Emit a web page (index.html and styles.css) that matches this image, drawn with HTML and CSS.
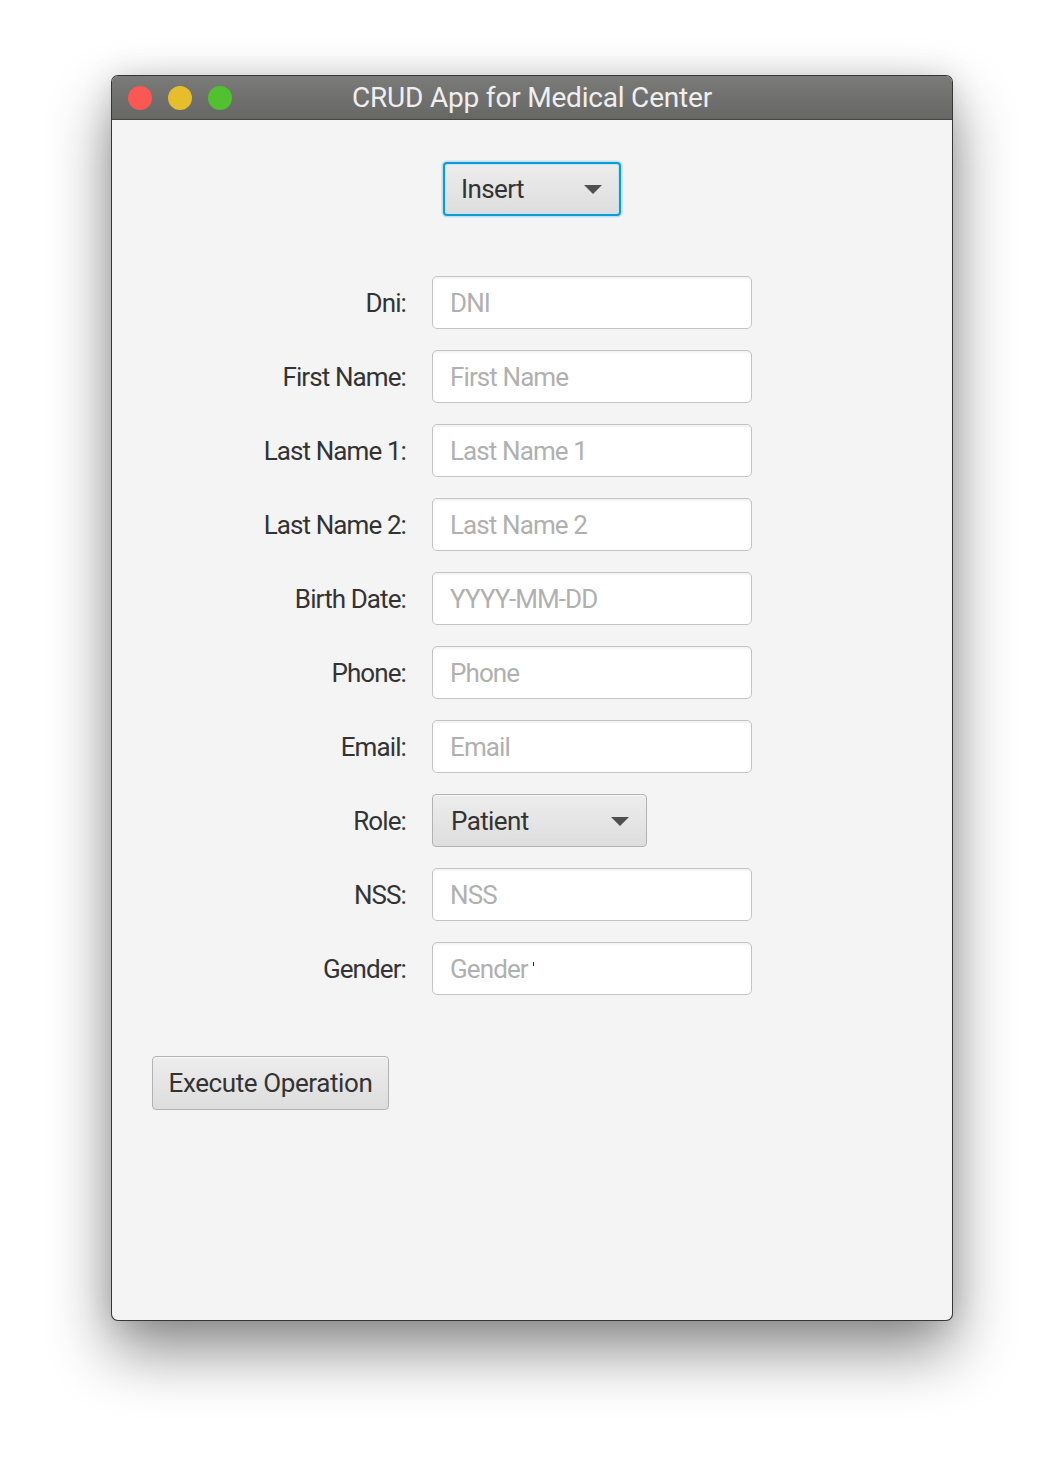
FILE: index.html
```html
<!DOCTYPE html>
<html lang="en">
<head>
<meta charset="utf-8">
<title>CRUD App for Medical Center</title>
<link rel="stylesheet" href="styles.css">
</head>
<body>
<div class="window">
  <div class="titlebar">
    <div class="lights">
      <span class="light red"></span>
      <span class="light yellow"></span>
      <span class="light green"></span>
    </div>
    <div class="title">CRUD App for Medical Center</div>
  </div>
  <div class="content">
    <div class="top">
      <div class="combo combo-op focused">
        <span class="combo-text">Insert</span>
        <span class="arrow"></span>
      </div>
    </div>
    <div class="form">
      <label class="lbl">Dni:</label>
      <input class="field" type="text" placeholder="DNI">
      <label class="lbl">First Name:</label>
      <input class="field" type="text" placeholder="First Name">
      <label class="lbl">Last Name 1:</label>
      <input class="field" type="text" placeholder="Last Name 1">
      <label class="lbl">Last Name 2:</label>
      <input class="field" type="text" placeholder="Last Name 2">
      <label class="lbl">Birth Date:</label>
      <input class="field" type="text" placeholder="YYYY-MM-DD">
      <label class="lbl">Phone:</label>
      <input class="field" type="text" placeholder="Phone">
      <label class="lbl">Email:</label>
      <input class="field" type="text" placeholder="Email">
      <label class="lbl">Role:</label>
      <div class="combo combo-role">
        <span class="combo-text">Patient</span>
        <span class="arrow"></span>
      </div>
      <label class="lbl">NSS:</label>
      <input class="field" type="text" placeholder="NSS">
      <label class="lbl">Gender:</label>
      <div class="field-wrap">
        <input class="field" type="text" placeholder="Gender">
        <span class="caret"></span>
      </div>
    </div>
    <div class="actions">
      <button class="btn" type="button">Execute Operation</button>
    </div>
  </div>
</div>
</body>
</html>
```

FILE: styles.css
```css
html, body {
  margin: 0;
  padding: 0;
  background: #ffffff;
}
body {
  width: 1064px;
  height: 1468px;
  padding: 75px 0 0 111px;
  box-sizing: border-box;
  font-family: Roboto, "Liberation Sans", Arial, sans-serif;
  overflow: hidden;
}
.window {
  width: 842px;
  height: 1246px;
  box-sizing: border-box;
  border: 1px solid rgba(0, 0, 0, 0.78);
  border-radius: 7px;
  background: #f4f4f4;
  overflow: hidden;
  display: flex;
  flex-direction: column;
  box-shadow: 0 30px 62px rgba(0, 0, 0, 0.45), 0 0 30px rgba(0, 0, 0, 0.12);
}
.titlebar {
  position: relative;
  height: 43px;
  flex: none;
  background: linear-gradient(#7b7b7a, #666665);
  border-bottom: 1px solid #444;
  display: flex;
  align-items: center;
  justify-content: center;
}
.lights {
  position: absolute;
  left: 16px;
  top: 10px;
  display: flex;
  gap: 16px;
}
.light {
  width: 24px;
  height: 24px;
  border-radius: 50%;
  display: block;
}
.red { background: #fc5753; }
.yellow { background: #e6bd2a; }
.green { background: #52c12f; }
.title {
  color: #efefef;
  font-size: 28px;
  letter-spacing: -0.2px;
  line-height: 45px;
}
.content {
  flex: 1;
  display: flex;
  flex-direction: column;
}
.top {
  display: flex;
  justify-content: center;
  padding-top: 42px;
}
.combo {
  box-sizing: border-box;
  height: 54px;
  border: 1px solid #b2b2b2;
  border-radius: 4px;
  background: linear-gradient(#ededed, #dddddd);
  display: flex;
  align-items: center;
  justify-content: space-between;
  padding: 0 17px 0 18px;
  color: #333;
  font-size: 26px;
  letter-spacing: -0.6px;
  box-shadow: inset 0 1px 0 rgba(255,255,255,0.7);
}
.combo-op {
  width: 178px;
}
.combo-op.focused {
  border: 2px solid #0a9dd9;
  box-shadow: 0 0 0 1.5px rgba(10, 157, 217, 0.22), inset 0 0 0 1px #c6e3f0;
  padding: 0 17px 0 16px;
}
.combo-role {
  width: 215px;
  height: 53px;
  justify-self: start;
}
.arrow {
  width: 0;
  height: 0;
  border-left: 9px solid transparent;
  border-right: 9px solid transparent;
  border-top: 9px solid #4f4f4f;
  margin-top: 1px;
}
.form {
  display: grid;
  grid-template-columns: 294px 320px;
  column-gap: 26px;
  row-gap: 21px;
  padding-top: 60px;
  align-items: center;
}
.lbl {
  text-align: right;
  color: #333;
  font-size: 26px;
  letter-spacing: -0.9px;
}
.field {
  box-sizing: border-box;
  width: 320px;
  height: 53px;
  border: 1px solid #c4c4c4;
  border-radius: 5px;
  background: #fff;
  box-shadow: inset 0 2px 2px rgba(0,0,0,0.05);
  padding: 0 17px;
  margin: 0;
  font-family: inherit;
  font-size: 26px;
  letter-spacing: -0.9px;
  color: #333;
  outline: none;
  display: block;
}
.field::placeholder {
  color: #b0b0b0;
  opacity: 1;
}
.field-wrap {
  position: relative;
  width: 320px;
}
.caret {
  position: absolute;
  left: 101px;
  top: 20px;
  width: 1px;
  height: 4px;
  background: #222;
}
.actions {
  padding: 61px 0 0 40px;
}
.btn {
  box-sizing: border-box;
  width: 237px;
  height: 54px;
  border: 1px solid #b2b2b2;
  border-radius: 4px;
  background: linear-gradient(#ededed, #dddddd);
  box-shadow: inset 0 1px 0 rgba(255,255,255,0.7);
  font-family: inherit;
  font-size: 26px;
  letter-spacing: -0.4px;
  color: #333;
  padding: 0;
  cursor: default;
}
```
